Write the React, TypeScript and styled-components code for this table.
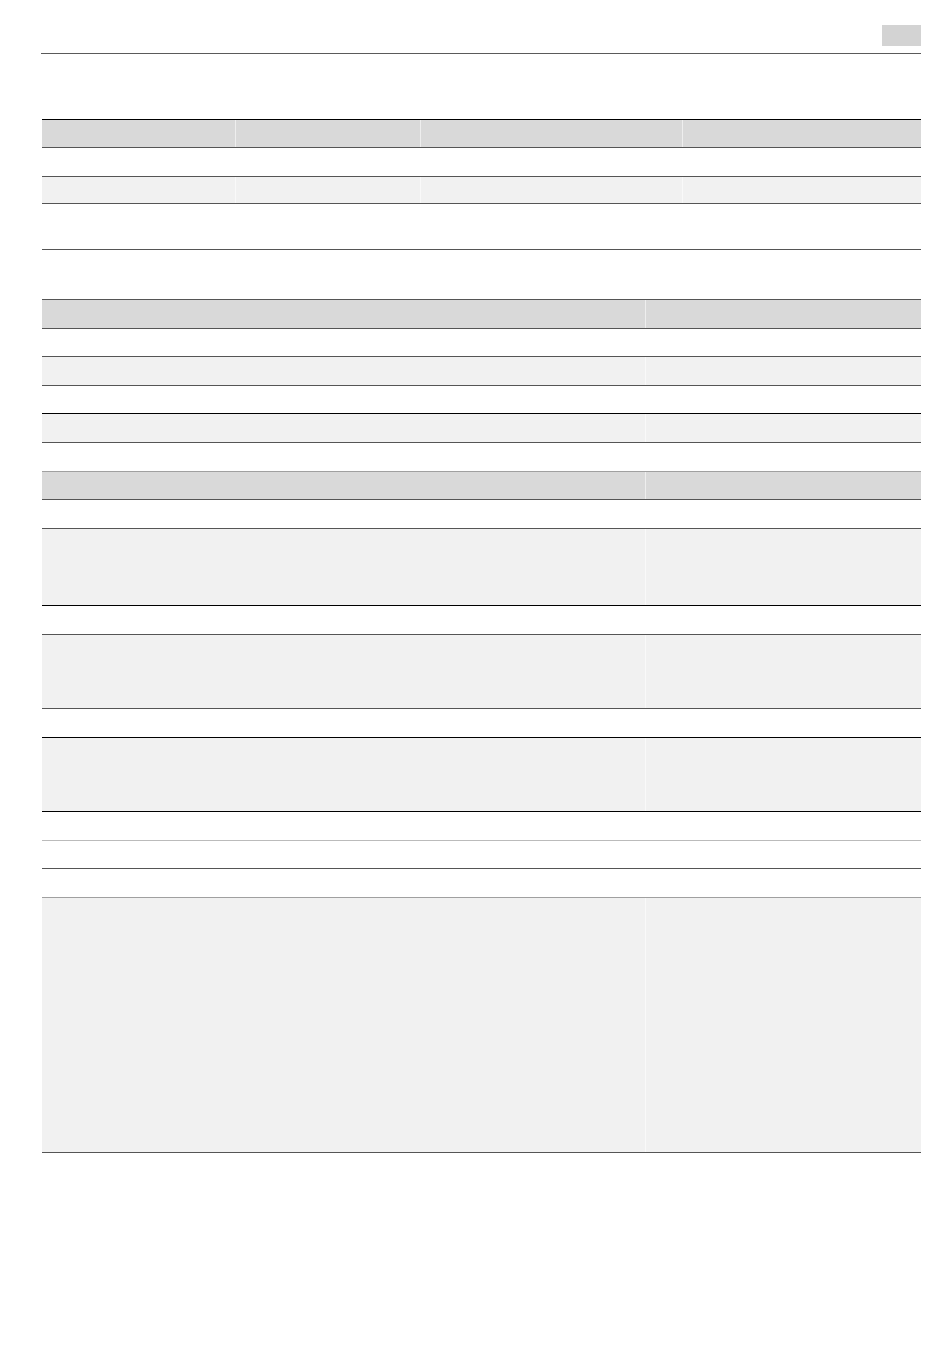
import styled, { createGlobalStyle } from "styled-components";

const GlobalStyle = createGlobalStyle`
  html, body {
    margin: 0;
    padding: 0;
    background: #ffffff;
    font-family: "Liberation Sans", Arial, sans-serif;
  }
`;

const Page = styled.div`
  width: 879px;
  padding: 25px 0 0 42px;
  box-sizing: content-box;
`;

const Header = styled.header`
  display: flex;
  justify-content: flex-end;
`;

const PageTag = styled.div`
  width: 39px;
  height: 21px;
  background: #d3d3d3;
`;

const Rule = styled.hr`
  margin: 7px 0 0 -1px;
  width: 880px;
  border: 0;
  height: 1px;
  background: #5a5a5a;
`;

const Table = styled.section<{ $top: string; $gap: number }>`
  display: flex;
  flex-direction: column;
  margin-top: ${(p) => p.$gap}px;
  border-top: 1px solid ${(p) => p.$top};
`;

const Row = styled.div<{ $cols: string; $h: number; $bg: string; $line: string }>`
  display: grid;
  grid-template-columns: ${(p) => p.$cols};
  height: ${(p) => p.$h}px;
  box-sizing: border-box;
  background: ${(p) => p.$bg};
  border-bottom: 1px solid ${(p) => p.$line};
`;

const Cell = styled.div`
  & + & {
    border-left: 1px solid rgba(255, 255, 255, 0.55);
  }
`;

const HEAD = "#d9d9d9";
const STRIPE = "#f1f1f1";
const WHITE = "#ffffff";
const DARK = "#555555";
const BLACK = "#000000";

type RowSpec = { h: number; bg: string; line: string };
type TableSpec = { gap: number; top: string; cols: string; count: number; rows: RowSpec[] };

const tables: TableSpec[] = [
  {
    gap: 65,
    top: BLACK,
    cols: "193px 185px 262px 1fr",
    count: 4,
    rows: [
      { h: 28, bg: HEAD, line: DARK },
      { h: 29, bg: WHITE, line: DARK },
      { h: 27, bg: STRIPE, line: DARK },
      { h: 46, bg: WHITE, line: DARK },
    ],
  },
  {
    gap: 49,
    top: DARK,
    cols: "603px 1fr",
    count: 2,
    rows: [
      { h: 29, bg: HEAD, line: DARK },
      { h: 28, bg: WHITE, line: DARK },
      { h: 29, bg: STRIPE, line: DARK },
      { h: 28, bg: WHITE, line: BLACK },
      { h: 29, bg: STRIPE, line: DARK },
    ],
  },
  {
    gap: 28,
    top: "#a0a0a0",
    cols: "603px 1fr",
    count: 2,
    rows: [
      { h: 28, bg: HEAD, line: DARK },
      { h: 29, bg: WHITE, line: DARK },
      { h: 77, bg: STRIPE, line: BLACK },
      { h: 29, bg: WHITE, line: DARK },
      { h: 74, bg: STRIPE, line: DARK },
      { h: 29, bg: WHITE, line: BLACK },
      { h: 74, bg: STRIPE, line: BLACK },
      { h: 29, bg: WHITE, line: "#bbbbbb" },
      { h: 28, bg: WHITE, line: DARK },
      { h: 29, bg: WHITE, line: "#a0a0a0" },
      { h: 255, bg: STRIPE, line: DARK },
    ],
  },
];

export default function App() {
  return (
    <>
      <GlobalStyle />
      <Page>
        <Header>
          <PageTag />
        </Header>
        <Rule />
        {tables.map((t, ti) => (
          <Table key={ti} $gap={t.gap} $top={t.top}>
            {t.rows.map((r, ri) => (
              <Row key={ri} $cols={t.cols} $h={r.h} $bg={r.bg} $line={r.line}>
                {Array.from({ length: t.count }).map((_, ci) => (
                  <Cell key={ci} />
                ))}
              </Row>
            ))}
          </Table>
        ))}
      </Page>
    </>
  );
}
